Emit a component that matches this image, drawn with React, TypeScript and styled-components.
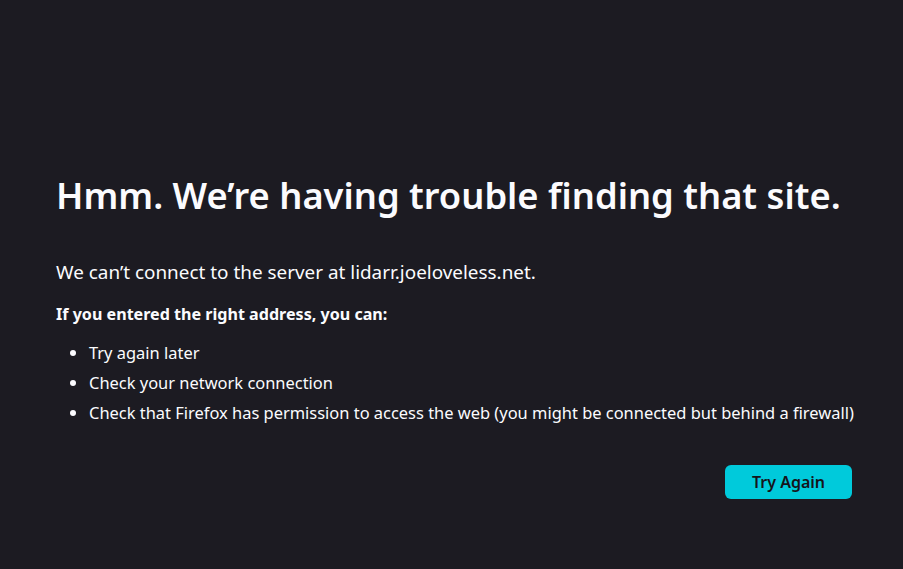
import styled, { createGlobalStyle } from 'styled-components';

const GlobalStyle = createGlobalStyle`
  html, body {
    margin: 0;
    padding: 0;
    background: #1c1b22;
  }
  body {
    font-family: 'Noto Sans', 'Open Sans', sans-serif;
    color: #fbfbfe;
  }
`;

const Page = styled.div`
  height: 569px;
  box-sizing: border-box;
  padding: 167px 0 0 56px;
`;

const Container = styled.div`
  width: 796px;
`;

const Title = styled.h1`
  margin: 0;
  font-size: 36.3px;
  font-weight: 600;
  line-height: 56px;
`;

const Lead = styled.p`
  margin: 35px 0 0;
  font-size: 18.9px;
  line-height: 28px;
`;

const Subhead = styled.p`
  margin: 16px 0 0;
  font-size: 16.1px;
  font-weight: 700;
  line-height: 24px;
`;

const List = styled.ul`
  margin: 15px 0 0;
  padding: 0 0 0 33px;
  font-size: 16.45px;
  line-height: 24px;

  li {
    margin-bottom: 6px;
    white-space: nowrap;
  }
`;

const Actions = styled.div`
  display: flex;
  justify-content: flex-end;
  margin-top: 40px;
`;

const PrimaryButton = styled.button`
  height: 34px;
  padding: 0 27px;
  border: none;
  border-radius: 6px;
  background: #00cadb;
  color: #15141a;
  font-family: inherit;
  font-size: 16px;
  font-weight: 600;
  cursor: pointer;
`;

export default function App() {
  return (
    <>
      <GlobalStyle />
      <Page>
        <Container>
          <Title>Hmm. We’re having trouble finding that site.</Title>
          <Lead>We can’t connect to the server at lidarr.joeloveless.net.</Lead>
          <Subhead>If you entered the right address, you can:</Subhead>
          <List>
            <li>Try again later</li>
            <li>Check your network connection</li>
            <li>
              Check that Firefox has permission to access the web (you might be connected but
              behind a firewall)
            </li>
          </List>
          <Actions>
            <PrimaryButton>Try Again</PrimaryButton>
          </Actions>
        </Container>
      </Page>
    </>
  );
}
